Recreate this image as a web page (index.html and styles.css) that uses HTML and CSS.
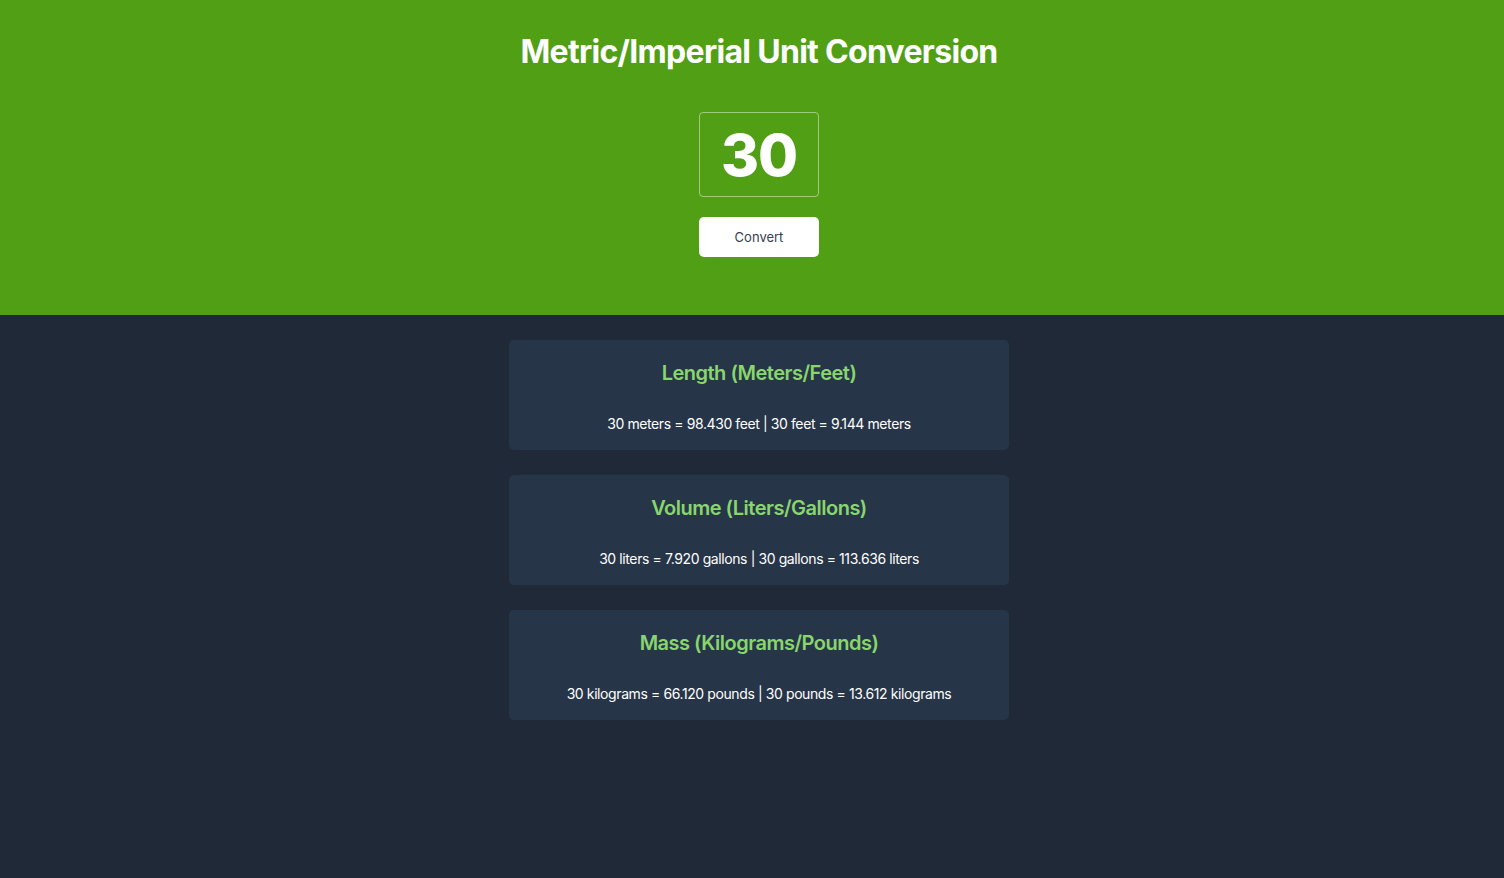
FILE: index.html
```html
<!DOCTYPE html>
<html lang="en">
<head>
<meta charset="utf-8">
<title>Metric/Imperial Unit Conversion</title>
<link rel="stylesheet" href="styles.css">
</head>
<body>
<header class="hero">
  <h1 class="title">Metric/Imperial Unit Conversion</h1>
  <input class="value-input" type="text" value="30">
  <button class="convert-btn">Convert</button>
</header>
<main class="results">
  <section class="card">
    <h2 class="card-title">Length (Meters/Feet)</h2>
    <p class="card-text">30 meters = 98.430 feet | 30 feet = 9.144 meters</p>
  </section>
  <section class="card">
    <h2 class="card-title">Volume (Liters/Gallons)</h2>
    <p class="card-text">30 liters = 7.920 gallons | 30 gallons = 113.636 liters</p>
  </section>
  <section class="card">
    <h2 class="card-title">Mass (Kilograms/Pounds)</h2>
    <p class="card-text">30 kilograms = 66.120 pounds | 30 pounds = 13.612 kilograms</p>
  </section>
</main>
</body>
</html>
```
FILE: styles.css
```css
* { box-sizing: border-box; }
html, body { margin: 0; padding: 0; }
body {
  font-family: Inter, "Noto Sans", sans-serif;
  background: #1f2937;
  min-height: 878px;
}
.hero {
  background: #519f15;
  display: flex;
  flex-direction: column;
  align-items: center;
  padding: 32px 0 58px 14px;
}
.title {
  margin: 0 0 40px;
  font-size: 32px;
  line-height: 40px;
  font-weight: 700;
  color: #ffffff;
  letter-spacing: -0.7px;
}
.value-input {
  width: 120px;
  height: 85px;
  background: transparent;
  border: 1px solid rgba(255,255,255,0.45);
  border-radius: 4px;
  color: #ffffff;
  font-family: Inter, "Noto Sans", sans-serif;
  font-size: 58px;
  font-weight: 800;
  text-align: center;
  padding: 0;
  outline: none;
  letter-spacing: -1px;
}
.convert-btn {
  margin-top: 20px;
  width: 120px;
  height: 40px;
  background: #ffffff;
  border: none;
  border-radius: 5px;
  font-family: Inter, "Noto Sans", sans-serif;
  font-size: 13px;
  color: #374151;
}
.results {
  display: flex;
  flex-direction: column;
  align-items: center;
  gap: 25px;
  padding: 25px 0 0 14px;
}
.card {
  width: 500px;
  height: 110px;
  background: #273549;
  border-radius: 5px;
  padding: 19px 8px 0;
  text-align: center;
}
.card-title {
  margin: 0;
  font-size: 20px;
  line-height: 28px;
  font-weight: 600;
  color: #88d66c;
  letter-spacing: -0.5px;
}
.card-text {
  margin: 27px 0 0;
  font-size: 14px;
  line-height: 20px;
  color: #ffffff;
  letter-spacing: -0.4px;
}
```
